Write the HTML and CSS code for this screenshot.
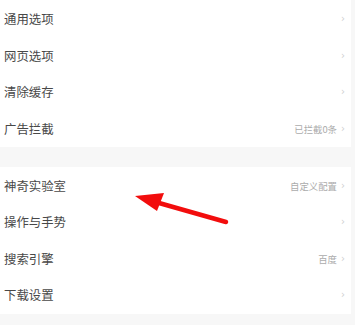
FILE: index.html
```html
<!DOCTYPE html>
<html>
<head>
<meta charset="utf-8">
<link rel="stylesheet" href="styles.css">
</head>
<body>
<div class="page">
  <div class="group first">
    <div class="row"><span class="label">通用选项</span><span class="right"><span class="chev">›</span></span></div>
    <div class="row"><span class="label">网页选项</span><span class="right"><span class="chev">›</span></span></div>
    <div class="row"><span class="label">清除缓存</span><span class="right"><span class="chev">›</span></span></div>
    <div class="row"><span class="label">广告拦截</span><span class="right"><span class="val">已拦截0条</span><span class="chev">›</span></span></div>
  </div>
  <div class="gap"></div>
  <div class="group">
    <div class="row"><span class="label">神奇实验室</span><span class="right"><span class="val">自定义配置</span><span class="chev">›</span></span></div>
    <div class="row"><span class="label">操作与手势</span><span class="right"><span class="chev">›</span></span></div>
    <div class="row"><span class="label">搜索引擎</span><span class="right"><span class="val">百度</span><span class="chev">›</span></span></div>
    <div class="row"><span class="label">下载设置</span><span class="right"><span class="chev">›</span></span></div>
  </div>
  <svg class="arrow" width="355" height="325" viewBox="0 0 355 325">
    <line x1="226" y1="222" x2="152" y2="201" stroke="#f20d0d" stroke-width="4.5" stroke-linecap="round"/>
    <polygon points="135,196 164,193 157,211" fill="#f20d0d"/>
  </svg>
</div>
</body>
</html>
```
FILE: styles.css
```css
html, body {
  margin: 0;
  padding: 0;
  background: #f7f7f7;
}
body {
  width: 355px;
  height: 325px;
  overflow: hidden;
  font-family: "Noto Sans CJK SC", "Noto Sans", sans-serif;
}
.page {
  position: relative;
  width: 351px;
  height: 325px;
}
.group {
  background: #fff;
  display: flex;
  flex-direction: column;
}
.group.first {
  padding-top: 1px;
}
.row {
  height: 36.6px;
  display: flex;
  align-items: center;
  justify-content: space-between;
  padding: 0 5px 0 4px;
}
.label {
  font-size: 12.4px;
  color: #484848;
}
.right {
  display: flex;
  align-items: center;
  gap: 4px;
}
.val {
  font-size: 9.4px;
  color: #ababab;
}
.chev {
  font-family: "DejaVu Sans", sans-serif;
  font-size: 10px;
  color: #cfcfcf;
  width: 5px;
  line-height: 1;
}
.gap {
  height: 20px;
}
.arrow {
  position: absolute;
  left: 0;
  top: 0;
  pointer-events: none;
}
```
